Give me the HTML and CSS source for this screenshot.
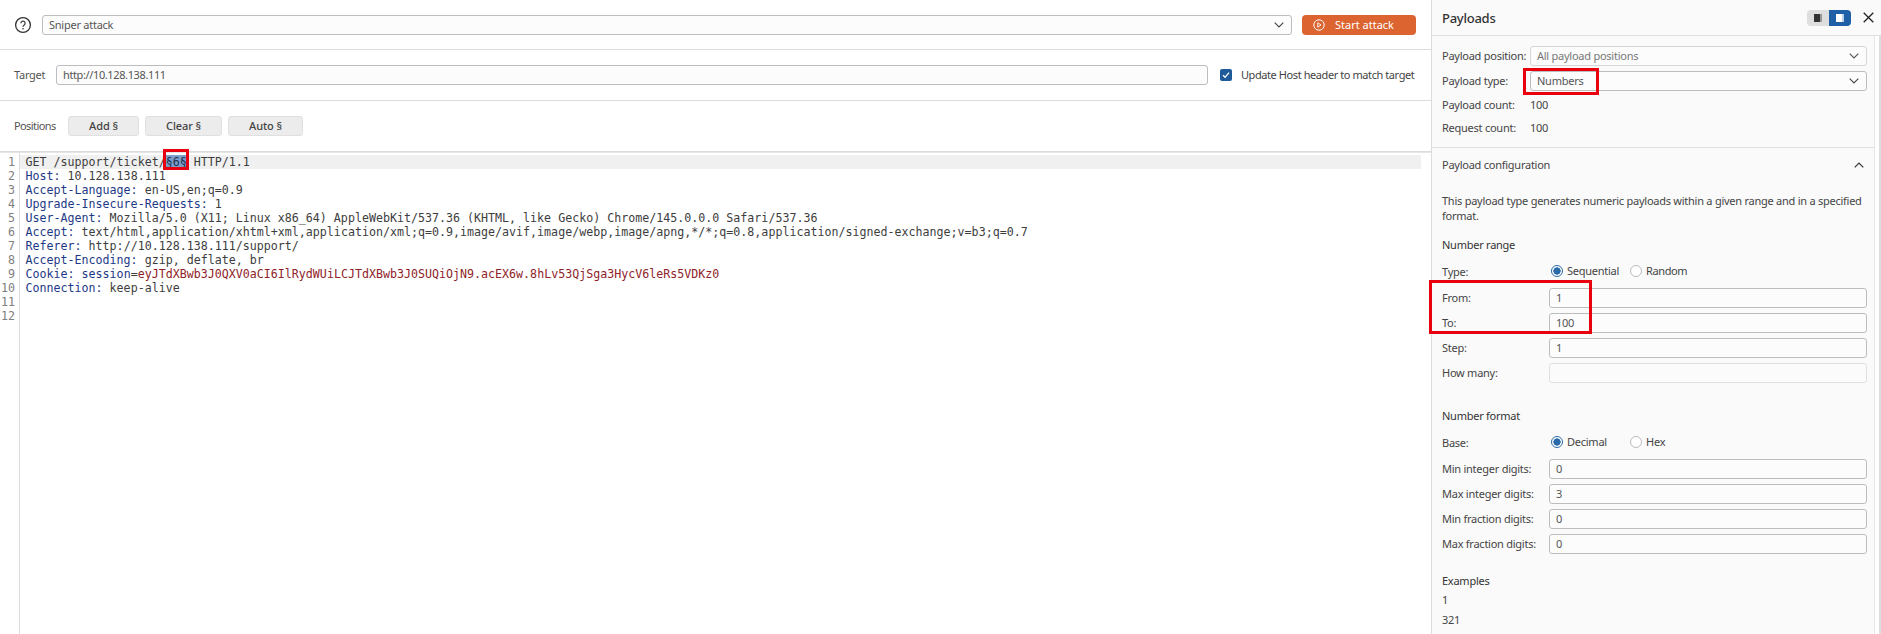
FILE: index.html
```html
<!DOCTYPE html>
<html lang="en">
<head>
<meta charset="utf-8">
<title>Intruder</title>
<link rel="stylesheet" href="styles.css">
</head>
<body>
<div class="app">
  <main class="main">
    <div class="bar bar-top">
      <svg class="help" width="18" height="18" viewBox="0 0 18 18"><circle cx="9" cy="9" r="7.4" fill="none" stroke="#333" stroke-width="1.3"/><path d="M6.9 7.2a2.1 2.1 0 1 1 3.3 1.7c-.8.6-1.2 1-1.2 1.9" fill="none" stroke="#333" stroke-width="1.2"/><circle cx="9" cy="12.7" r=".8" fill="#333"/></svg>
      <div class="field select grow"><span>Sniper attack</span><svg class="chev" width="10" height="6" viewBox="0 0 10 6"><path d="M.7.7 5 5 9.3.7" fill="none" stroke="#444" stroke-width="1.1"/></svg></div>
      <button class="start"><svg width="12" height="12" viewBox="0 0 12 12"><circle cx="6" cy="6" r="5.2" fill="none" stroke="#fff" stroke-width="1"/><path d="M4.8 3.8 8 6 4.8 8.2z" fill="none" stroke="#fff" stroke-width=".9"/></svg><span>Start attack</span></button>
    </div>
    <div class="bar bar-target">
      <span class="lbl">Target</span>
      <div class="field grow tight"><span>http://10.128.138.111</span></div>
      <label class="check"><span class="box"><svg width="8" height="8" viewBox="0 0 8 8"><path d="M1 4.2 3.1 6.3 7 1.6" fill="none" stroke="#fff" stroke-width="1.3"/></svg></span><span>Update Host header to match target</span></label>
    </div>
    <div class="bar bar-pos">
      <span class="lbl">Positions</span>
      <button class="btn b-add">Add §</button>
      <button class="btn b-clear">Clear §</button>
      <button class="btn b-auto">Auto §</button>
    </div>
    <div class="editor">
      <div class="gutter">
        <div>1</div><div>2</div><div>3</div><div>4</div><div>5</div><div>6</div><div>7</div><div>8</div><div>9</div><div>10</div><div>11</div><div>12</div>
      </div>
      <div class="code">
        <div class="ln first">GET /support/ticket/<span class="sel">§6§</span> HTTP/1.1</div>
        <div class="ln"><b>Host:</b> 10.128.138.111</div>
        <div class="ln"><b>Accept-Language:</b> en-US,en;q=0.9</div>
        <div class="ln"><b>Upgrade-Insecure-Requests:</b> 1</div>
        <div class="ln"><b>User-Agent:</b> Mozilla/5.0 (X11; Linux x86_64) AppleWebKit/537.36 (KHTML, like Gecko) Chrome/145.0.0.0 Safari/537.36</div>
        <div class="ln"><b>Accept:</b> text/html,application/xhtml+xml,application/xml;q=0.9,image/avif,image/webp,image/apng,*/*;q=0.8,application/signed-exchange;v=b3;q=0.7</div>
        <div class="ln"><b>Referer:</b> http://10.128.138.111/support/</div>
        <div class="ln"><b>Accept-Encoding:</b> gzip, deflate, br</div>
        <div class="ln"><b>Cookie:</b> <b>session</b>=<i>eyJTdXBwb3J0QXV0aCI6IlRydWUiLCJTdXBwb3J0SUQiOjN9.acEX6w.8hLv53QjSga3HycV6leRs5VDKz0</i></div>
        <div class="ln"><b>Connection:</b> keep-alive</div>
        <div class="ln"></div>
        <div class="ln"></div>
      </div>
    </div>
    <div class="mark mark-code"></div>
  </main>
  <aside class="panel">
    <header class="p-head">
      <h1>Payloads</h1>
      <div class="toggle">
        <span class="t-off"><i></i></span>
        <span class="t-on"><i></i></span>
      </div>
      <svg class="close" width="11" height="11" viewBox="0 0 11 11"><path d="M.7.7 10.3 10.3M10.3.7.7 10.3" stroke="#222" stroke-width="1.3"/></svg>
    </header>
    <section class="p-sec1">
      <div class="grid g-top">
        <span>Payload position:</span>
        <div class="field select dim"><span>All payload positions</span><svg class="chev" width="10" height="6" viewBox="0 0 10 6"><path d="M.7.7 5 5 9.3.7" fill="none" stroke="#555" stroke-width="1.1"/></svg></div>
        <span>Payload type:</span>
        <div class="field select"><span>Numbers</span><svg class="chev" width="10" height="6" viewBox="0 0 10 6"><path d="M.7.7 5 5 9.3.7" fill="none" stroke="#444" stroke-width="1.1"/></svg></div>
        <span class="tall">Payload count:</span><span class="tall">100</span>
        <span class="tall">Request count:</span><span class="tall">100</span>
      </div>
    </section>
    <section class="p-sec2">
      <div class="sec-title"><span>Payload configuration</span><svg width="10" height="6" viewBox="0 0 10 6"><path d="M.7 5.3 5 1l4.3 4.3" fill="none" stroke="#333" stroke-width="1.2"/></svg></div>
      <p class="desc">This payload type generates numeric payloads within a given range and in a specified format.</p>
      <h2 class="h-range">Number range</h2>
      <div class="grid g-form">
        <span>Type:</span>
        <div class="radios"><span class="radio on"></span><span class="r-a">Sequential</span><span class="radio"></span><span class="tight">Random</span></div>
        <span>From:</span><div class="field"><span>1</span></div>
        <span>To:</span><div class="field"><span>100</span></div>
        <span>Step:</span><div class="field"><span>1</span></div>
        <span>How many:</span><div class="field off"></div>
      </div>
      <h2 class="h-format">Number format</h2>
      <div class="grid g-form">
        <span>Base:</span>
        <div class="radios"><span class="radio on"></span><span class="r-a">Decimal</span><span class="radio"></span><span>Hex</span></div>
        <span>Min integer digits:</span><div class="field"><span>0</span></div>
        <span>Max integer digits:</span><div class="field"><span>3</span></div>
        <span>Min fraction digits:</span><div class="field"><span>0</span></div>
        <span>Max fraction digits:</span><div class="field"><span>0</span></div>
      </div>
      <h2 class="h-ex">Examples</h2>
      <div class="ex">1</div>
      <div class="ex">321</div>
    </section>
    <div class="scroll"></div>
    <div class="mark mark-num"></div>
    <div class="mark mark-range"></div>
  </aside>
</div>
</body>
</html>
```
FILE: styles.css
```css
* { box-sizing: border-box; }
html, body { margin: 0; height: 100%; overflow: hidden; background: #fff; }
body { font: 11px/16px "Noto Sans", sans-serif; letter-spacing: -.25px; color: #444; white-space: nowrap; }
.app { display: grid; grid-template-columns: 1431px 450px; width: 1881px; height: 634px; }
.main { position: relative; display: flex; flex-direction: column; min-width: 0; }

.bar { display: flex; align-items: center; border-bottom: 1px solid #dcdcdc; padding: 0 15px 0 14px; height: 51px; flex: none; }
.bar-top { height: 50px; padding-top: 0; padding-left: 14px; }
.help { margin-right: 10px; flex: none; }
.grow { flex: 1; min-width: 0; }
.tight { letter-spacing: -.38px; }
.field { display: flex; align-items: center; justify-content: space-between; height: 20px; padding: 0 6px; background: #fcfcfc; border: 1px solid #bdbdbd; border-radius: 3px; color: #555; line-height: 18px; }
.field.dim { border-color: #d6d6d6; color: #777; }
.field.off { border-color: #e0e0e0; background: #fbfbfb; }
.chev { flex: none; margin-right: 1px; }
.start { flex: none; width: 114px; height: 20px; margin-left: 10px; display: flex; align-items: center; gap: 10px; padding: 0 0 0 11px; border: 0; border-radius: 4px; background: #dc6430; color: #fff; font: 11px/16px "Noto Sans", sans-serif; }

.lbl { color: #555; }
.bar-target .lbl { width: 42px; flex: none; }
.check { flex: none; display: flex; align-items: center; width: 196px; margin-left: 12px; color: #444; letter-spacing: -.42px; }
.box { width: 12px; height: 12px; margin-right: 9px; flex: none; border-radius: 2px; background: #1f5a99; display: flex; align-items: center; justify-content: center; }
.bar-pos .lbl { width: 54px; flex: none; letter-spacing: -.6px; }
.btn { flex: none; height: 20px; margin-right: 6px; padding: 0; border: 1px solid #e0e0e0; border-radius: 3px; background: #ececec; color: #444; font: 500 11px/16px "Noto Sans", sans-serif; letter-spacing: -.1px; }
.b-add { width: 71px; }
.b-clear { width: 77px; }
.b-auto { width: 75px; }

.editor { flex: 1; display: flex; min-height: 0; padding-top: 2px; border-top: 1px solid #e6e6e6; font: 11.65px/14px "DejaVu Sans Mono", monospace; letter-spacing: 0; color: #3d3d3d; }
.gutter { flex: none; width: 20px; margin-top: -2px; padding: 2px 4px 0 0; border-right: 1px solid #dcdcdc; text-align: right; color: #808080; }
.code { flex: 1; min-width: 0; margin-right: 10px; }
.ln { height: 14px; padding-left: 5.5px; white-space: pre; }
.ln.first { background: #f0f0f0; }
.ln b { font-weight: 400; color: #1d3886; }
.ln i { font-style: normal; color: #8f2329; }
.sel { background: #7c9ecb; color: #1f3350; }

.panel { position: relative; background: #fafafa; border-left: 1px solid #dcdcdc; }
.p-head { display: flex; align-items: center; height: 36px; padding: 0 5px 0 10px; border-bottom: 1px solid #e0e0e0; }
.p-head h1 { flex: 1; margin: 0; font: 500 13px/20px "Noto Sans", sans-serif; color: #333; }
.toggle { display: flex; width: 44px; height: 16px; margin-right: 12px; }
.t-off, .t-on { width: 22px; display: flex; align-items: center; justify-content: center; }
.t-off { background: #dedede; border-radius: 4px 0 0 4px; }
.t-on { background: #1f5fa6; border-radius: 0 4px 4px 0; }
.t-off i { width: 8px; height: 8px; background: linear-gradient(90deg, #333 75%, #999 75%); }
.t-on i { width: 8px; height: 8px; background: linear-gradient(90deg, #fff 75%, #b9cfe6 75%); }
.close { flex: none; margin-right: 2px; }

.grid { display: grid; row-gap: 5px; align-items: center; padding-right: 14px; }
.p-sec1 { padding: 10px 0 10px 10px; border-bottom: 1px solid #e0e0e0; }
.g-top { grid-template-columns: 88px 1fr; }
.tall { line-height: 18px; }
.p-sec2 { padding: 0 0 0 10px; }
.sec-title { display: flex; align-items: center; justify-content: space-between; height: 34px; padding-right: 17px; color: #444; }
.desc { margin: 11px 14px 0 0; line-height: 15px; white-space: normal; }
h2 { margin: 0; font: 400 11px/16px "Noto Sans", sans-serif; color: #333; }
.h-range { margin-top: 14px; margin-bottom: 8px; }
.h-format { margin-top: 25px; margin-bottom: 8px; }
.h-ex { margin-top: 19px; margin-bottom: 3px; }
.g-form { grid-template-columns: 107px 1fr; }
.radios { display: flex; align-items: center; height: 20px; margin-bottom: 2px; }
.radio { width: 12px; height: 12px; margin: 0 4px 0 2px; border: 1px solid #bbb; border-radius: 50%; background: #fff; flex: none; }
.radio.on { border: 1.5px solid #2a6aa8; background: radial-gradient(circle, #2a6aa8 0 3.4px, #fff 3.9px); }
.r-a { width: 61px; }
.ex { height: 16px; margin-bottom: 4px; }

.scroll { position: absolute; top: 36px; right: 0; bottom: 0; width: 7px; background: linear-gradient(90deg, #e6e6e6 1px, #fff 1px, #fff 5px, #dedede 5px); }
.mark { position: absolute; border: 3px solid #e8000f; pointer-events: none; }
.mark-code { left: 163px; top: 149px; width: 26px; height: 21px; }
.mark-num { left: 91px; top: 68px; width: 76px; height: 27px; }
.mark-range { left: -3px; top: 280px; width: 163px; height: 54px; }
```
